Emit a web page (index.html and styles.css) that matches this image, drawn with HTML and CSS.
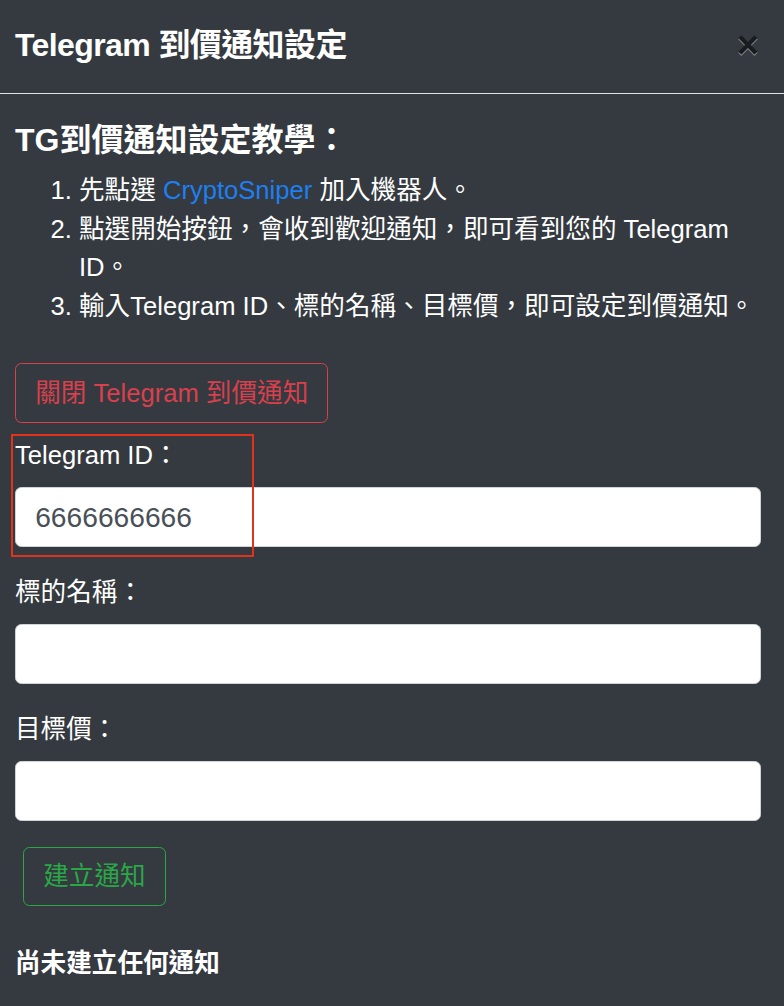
FILE: index.html
```html
<!DOCTYPE html>
<html lang="zh-Hant">
<head>
<meta charset="utf-8">
<title>Telegram 到價通知設定</title>
<link rel="stylesheet" href="styles.css">
</head>
<body>
<div class="modal">
  <div class="modal-header">
    <h5 class="modal-title">Telegram 到價通知設定</h5>
    <button class="close" type="button">×</button>
  </div>
  <div class="modal-body">
    <h5 class="guide-title">TG到價通知設定教學：</h5>
    <ol class="guide-list">
      <li>先點選 <a class="link" href="#">CryptoSniper</a> 加入機器人。</li>
      <li>點選開始按鈕，會收到歡迎通知，即可看到您的 Telegram ID。</li>
      <li>輸入Telegram ID、標的名稱、目標價，即可設定到價通知。</li>
    </ol>
    <div class="toggle-row">
      <button class="btn btn-outline-danger" type="button">關閉 Telegram 到價通知</button>
    </div>
    <div class="form-group highlighted">
      <label class="form-label">Telegram ID：</label>
      <input class="form-control" type="text" value="6666666666">
      <span class="annotation"></span>
    </div>
    <div class="form-group">
      <label class="form-label">標的名稱：</label>
      <input class="form-control" type="text" value="">
    </div>
    <div class="form-group">
      <label class="form-label">目標價：</label>
      <input class="form-control" type="text" value="">
    </div>
    <div class="create-row">
      <button class="btn btn-outline-success" type="button">建立通知</button>
    </div>
    <h6 class="empty-note">尚未建立任何通知</h6>
  </div>
</div>
</body>
</html>
```
FILE: styles.css
```css
html, body {
  margin: 0;
  padding: 0;
  background: #343a40;
}
body {
  font-family: "Liberation Sans", "Noto Sans CJK TC", sans-serif;
  font-size: 25.6px;
  line-height: 1.5;
  color: #fff;
}
.modal {
  width: 784px;
  min-height: 1006px;
  background: #343a40;
}
.modal-header {
  display: flex;
  align-items: center;
  justify-content: space-between;
  padding: 22px 15px 25px;
  border-bottom: 1px solid #dee2e6;
}
.modal-title {
  margin: 0;
  font-size: 32px;
  font-weight: 700;
  line-height: 46px;
  letter-spacing: -0.6px;
}
.close {
  background: none;
  border: 0;
  padding: 0;
  margin-right: 10px;
  font-family: "Liberation Sans", sans-serif;
  font-size: 38px;
  font-weight: 700;
  line-height: 1;
  color: #000;
  opacity: .5;
  text-shadow: 0 1px 0 #fff;
}
.modal-body {
  padding: 27px 23px 20px 15px;
}
.guide-title {
  margin: 0 0 12px;
  font-size: 32px;
  font-weight: 700;
  line-height: 1.2;
}
.guide-list {
  margin: 0 0 38px;
  padding-left: 64px;
  line-height: 38.4px;
}
.link {
  color: #1e7ff0;
  text-decoration: none;
}
.toggle-row {
  margin-bottom: 13px;
}
.btn {
  display: inline-block;
  font-family: inherit;
  font-size: 25.6px;
  line-height: 1.5;
  padding: 9.6px 19.2px;
  background: transparent;
  border: 1px solid;
  border-radius: 6.4px;
}
.btn-outline-danger {
  color: #d9404d;
  border-color: #d9404d;
}
.btn-outline-success {
  color: #2ba748;
  border-color: #2ba748;
}
.form-group {
  margin-bottom: 25.6px;
}
.highlighted {
  position: relative;
}
.form-label {
  display: block;
  margin-bottom: 13px;
  line-height: 38.4px;
}
.form-control {
  display: block;
  box-sizing: border-box;
  width: 100%;
  height: 60px;
  margin: 0;
  padding: 9px 19.2px;
  font-family: inherit;
  font-size: 28.2px;
  line-height: 1.4;
  color: #495057;
  background: #fff;
  border: 1px solid #ced4da;
  border-radius: 6.4px;
  outline: none;
}
.annotation {
  position: absolute;
  left: -4px;
  top: -2px;
  width: 239px;
  height: 119px;
  border: 2px solid #e0321c;
  pointer-events: none;
}
.create-row {
  padding-left: 8px;
  margin-top: 2px;
  margin-bottom: 42px;
}
.empty-note {
  margin: 0;
  font-size: 25.6px;
  font-weight: 700;
  line-height: 1.2;
}
```
